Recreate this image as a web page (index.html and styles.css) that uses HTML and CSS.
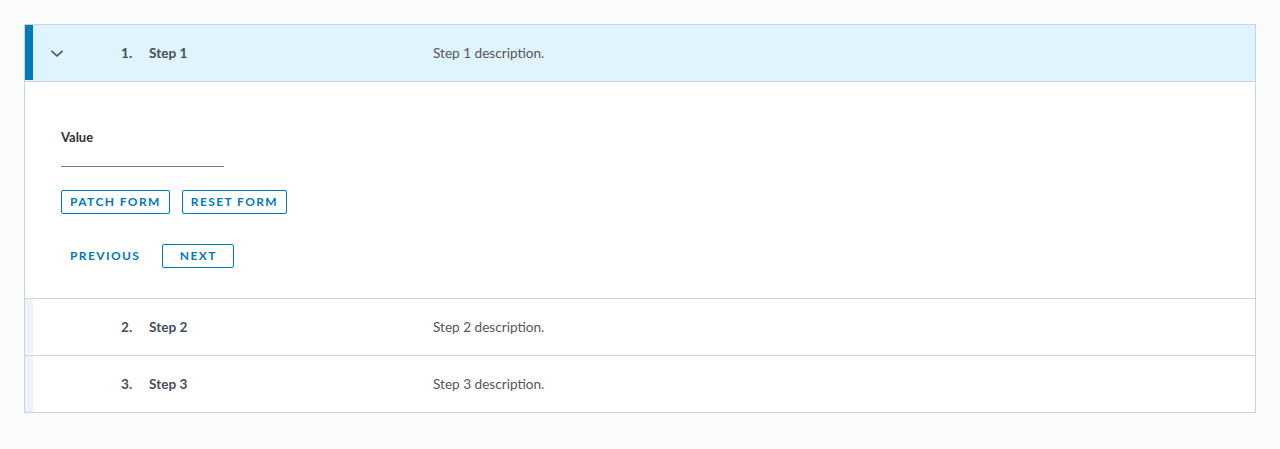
FILE: index.html
```html
<!DOCTYPE html>
<html>
<head>
<meta charset="utf-8">
<link rel="stylesheet" href="styles.css">
</head>
<body>
<div class="stepper">
  <div class="panel open">
    <div class="header">
      <span class="status"></span>
      <span class="chev"><svg width="14" height="9" viewBox="0 0 14 9"><path d="M1.5 1.8 L7 7 L12.5 1.8" fill="none" stroke="#454f5a" stroke-width="1.6"/></svg></span>
      <span class="num">1.</span>
      <span class="title">Step 1</span>
      <span class="desc">Step 1 description.</span>
    </div>
    <div class="content">
      <label class="label">Value</label>
      <div class="input"></div>
      <div class="btnrow">
        <button class="btn outline">Patch Form</button>
        <button class="btn outline">Reset Form</button>
      </div>
      <div class="btnrow nav">
        <button class="btn link">Previous</button>
        <button class="btn outline">Next</button>
      </div>
    </div>
  </div>
  <div class="panel">
    <div class="header">
      <span class="status"></span>
      <span class="chev"></span>
      <span class="num">2.</span>
      <span class="title">Step 2</span>
      <span class="desc">Step 2 description.</span>
    </div>
  </div>
  <div class="panel">
    <div class="header">
      <span class="status"></span>
      <span class="chev"></span>
      <span class="num">3.</span>
      <span class="title">Step 3</span>
      <span class="desc">Step 3 description.</span>
    </div>
  </div>
</div>
</body>
</html>
```
FILE: styles.css
```css
html, body {
  margin: 0;
  padding: 0;
  background: #fafcfc;
}
body {
  padding: 24px;
  font-family: Lato, "Open Sans", sans-serif;
  color: #565656;
}
.stepper {
  border: 1px solid #ccd4d9;
  background: #fff;
}
.panel + .panel {
  border-top: 1px solid #ccd4d9;
}
.header {
  display: flex;
  align-items: center;
  height: 56px;
  font-size: 13.6px;
  padding-bottom: 1px;
  box-sizing: border-box;
}
.open .header {
  background: #dff4fc;
  border-bottom: 1px solid #ccd4d9;
  height: 57px;
}
.status {
  align-self: stretch;
  width: 8px;
  background: #eef3f7;
  margin-bottom: -1px;
}
.open .status {
  background: #0079b8;
  margin-bottom: 0;
}
.chev {
  width: 48px;
  display: flex;
  justify-content: center;
  padding-top: 1px;
}
.num {
  margin-left: 40px;
  width: 28px;
  font-weight: 700;
  color: #454f5a;
}
.title {
  width: 284px;
  font-weight: 700;
  color: #454f5a;
}
.desc {
  color: #565656;
}
.content {
  padding: 48px 36px 30px;
  display: flex;
  flex-direction: column;
  align-items: flex-start;
}
.label {
  font-size: 13px;
  font-weight: 700;
  line-height: 14px;
  color: #313131;
}
.input {
  width: 163px;
  height: 22px;
  border-bottom: 1px solid #6a7b85;
}
.btnrow {
  display: flex;
  gap: 12px;
  margin-top: 23px;
}
.btnrow.nav {
  margin-top: 30px;
  gap: 13px;
}
.btn {
  font-family: Lato, "Open Sans", sans-serif;
  height: 24px;
  padding: 0 8px;
  font-size: 12px;
  font-weight: 700;
  letter-spacing: 1.4px;
  text-transform: uppercase;
  color: #0079b8;
  background: #fff;
  border: 1px solid #0079b8;
  border-radius: 2px;
  line-height: 22px;
}
.btn.link {
  border-color: transparent;
  padding: 0 8px;
}
.nav .btn.outline {
  width: 72px;
}
```
